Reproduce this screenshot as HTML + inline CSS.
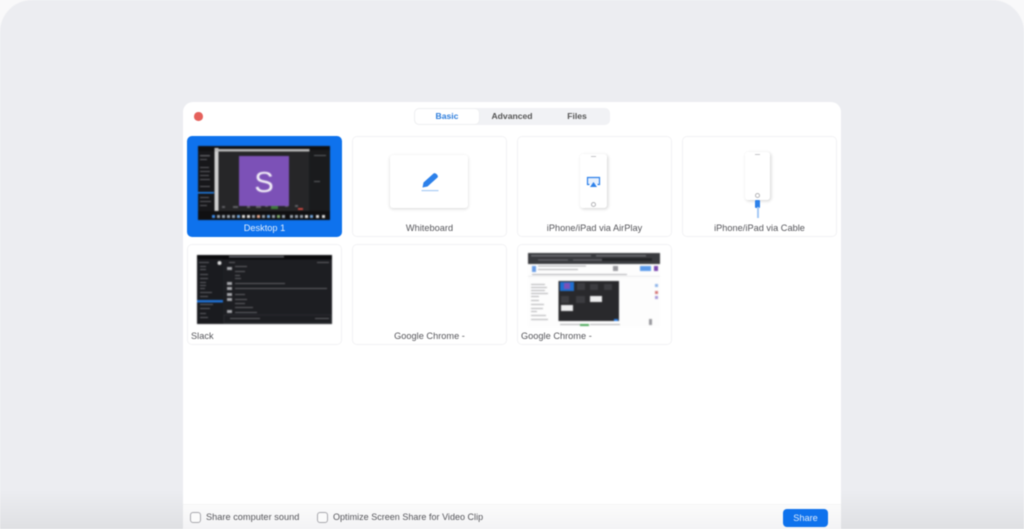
<!DOCTYPE html>
<html><head><meta charset="utf-8">
<style>
html,body{margin:0;padding:0;width:1024px;height:529px;overflow:hidden;background:#f9f9fa}
*{box-sizing:border-box}
#p{position:absolute;left:0;top:0;width:1024px;height:529px;overflow:hidden;font-family:"Liberation Sans",sans-serif;filter:blur(.4px)}
.a{position:absolute}
.bg{left:0;top:0;width:1024px;height:529px;border-radius:32px 32px 0 0;background:linear-gradient(#ecedf1 0,#ecedf1 490px,#dfe0e3 529px)}
.dlg{left:183px;top:102px;width:658px;height:427px;background:#fff;border-radius:10px 10px 0 0}
.foot{left:183px;top:504px;width:658px;height:25px;background:linear-gradient(#fbfbfb,#f3f3f5);border-top:1px solid #f5f5f6}
.card{width:155px;height:101px;border:1px solid #f2f2f4;border-radius:5px;background:#fff}
.lb{font-size:9.2px;line-height:12px;color:#55555a;white-space:nowrap;letter-spacing:.02px}
.c{text-align:center}
.tab{font-size:8.6px;font-weight:bold;line-height:16px;color:#555;text-align:center;top:108px}
.cb{width:11px;height:11px;border:1px solid #a9a9ae;border-radius:3px;background:#fbfbfb;top:512px}
.th{filter:blur(.5px)}
</style></head><body><div id="p">
<div class="a bg"></div>
<div class="a dlg"></div>
<div class="a" style="left:194px;top:112px;width:8.5px;height:8.5px;border-radius:50%;background:#e5615c"></div>

<div class="a" style="left:414px;top:108px;width:196px;height:16.5px;border-radius:5px;background:#f1f2f5"></div>
<div class="a" style="left:415px;top:109px;width:64px;height:14.5px;border-radius:4px;background:#fff;box-shadow:0 0 1px #ddd"></div>
<div class="a tab" style="left:415px;width:64px;color:#2d7ddc">Basic</div>
<div class="a tab" style="left:480px;width:64px">Advanced</div>
<div class="a tab" style="left:545px;width:64px">Files</div>

<!-- Desktop card -->
<div class="a" style="left:187px;top:136px;width:155px;height:101px;border-radius:5px;background:#0e72ed"></div>
<svg class="a th" style="left:198px;top:146px" width="132" height="74" viewBox="0 0 132 74">
<rect width="132" height="74" fill="#101012"/>
<rect x="20" y="4" width="91" height="61" fill="#262628"/>
<rect x="111" y="4" width="21" height="61" fill="#1a1b1d"/>
<rect x="0" y="5" width="16" height="60" fill="#17171a"/>
<rect x="16.5" y="2" width="4" height="63" fill="#cfcfcf"/>
<rect x="16.5" y="3" width="95" height="2.500" fill="#b9b9b9"/>
<rect x="0" y="46" width="16" height="1.500" fill="#1f7fe8"/>
<g fill="#5f5f64"><rect x="2" y="9" width="10" height="1.400"/><rect x="2" y="13" width="7" height="1"/><rect x="2" y="21" width="9" height="1"/><rect x="2" y="25" width="10" height="1"/><rect x="2" y="29" width="9" height="1"/><rect x="2" y="33" width="10" height="1"/><rect x="2" y="40" width="10" height="1"/><rect x="2" y="51" width="9" height="1"/><rect x="2" y="55" width="11" height="1"/><rect x="2" y="59" width="7" height="1"/><rect x="116" y="9" width="12" height="1"/><rect x="116" y="35" width="6" height="1"/>
<rect x="24" y="60" width="3" height="2"/><rect x="35" y="60" width="5" height="2"/><rect x="49" y="60" width="3" height="2"/><rect x="58" y="60" width="5" height="2"/><rect x="67" y="59" width="3" height="2"/><rect x="87" y="59" width="3" height="2"/><rect x="97" y="59" width="3" height="2"/></g>
<rect x="73" y="58" width="7" height="5" fill="#3e7a3a"/>
<rect x="100" y="62" width="5" height="2" fill="#c8463e"/>
<rect x="41" y="10" width="50" height="50" fill="#7c51b7"/>
<text x="66" y="46" font-family="Liberation Sans" font-size="29" fill="#f2eef8" text-anchor="middle">S</text>
<g fill="#98a1ac"><rect x="14" y="69" width="3" height="3" fill="#3d8be8"/><rect x="19" y="69" width="3" height="3"/><rect x="24" y="69" width="3" height="3"/><rect x="29" y="69" width="3" height="3"/><rect x="34" y="69" width="3" height="3"/><rect x="39" y="69" width="3" height="3" fill="#6fa1d8"/><rect x="44" y="69" width="3" height="3" fill="#ddd"/><rect x="49" y="69" width="3" height="3" fill="#ddd"/><rect x="54" y="69" width="3" height="3"/><rect x="59" y="69" width="3" height="3" fill="#e2a78f"/><rect x="64" y="69" width="3" height="3"/><rect x="69" y="69" width="3" height="3" fill="#6fa1d8"/><rect x="74" y="69" width="3" height="3"/><rect x="79" y="69" width="3" height="3" fill="#7ea96f"/><rect x="84" y="69" width="3" height="3"/><rect x="92" y="69" width="3" height="3"/><rect x="97" y="69" width="3" height="3"/><rect x="102" y="69" width="3" height="3"/><rect x="107" y="69" width="3" height="3" fill="#ddd"/><rect x="112" y="69" width="3" height="3" fill="#6fa1d8"/><rect x="118" y="69" width="3" height="3" fill="#ddd"/><rect x="124" y="69" width="3" height="3" fill="#ddd"/></g>
</svg>
<div class="a lb c" style="left:187px;top:222px;width:155px;color:#e4eefc">Desktop 1</div>

<!-- Whiteboard -->
<div class="a card" style="left:352px;top:136px"></div>
<div class="a" style="left:390px;top:155px;width:78px;height:53px;background:#fff;border-radius:3px;box-shadow:0 1px 3px rgba(0,0,0,.16)"></div>
<svg class="a" style="left:418px;top:170px" width="24" height="24" viewBox="0 0 24 24">
<path d="M4.500 17.500L5.500 12.500L15.500 3.500Q17 2.500 19 4.500Q20.500 6.500 19.500 7.500L9.500 16.500Z" fill="#2d81ea"/>
<rect x="3.500" y="20" width="17" height="1.200" fill="#a9ccf5"/>
</svg>
<div class="a lb c" style="left:352px;top:222px;width:155px">Whiteboard</div>

<!-- AirPlay -->
<div class="a card" style="left:517px;top:136px"></div>
<div class="a" style="left:580px;top:154px;width:27px;height:54px;background:#fff;border-radius:3px;box-shadow:1px 1px 3px rgba(0,0,0,.18)"></div>
<div class="a" style="left:591px;top:156px;width:5px;height:1px;background:#c5c5c8"></div>
<div class="a" style="left:591px;top:202px;width:5px;height:5px;border:1px solid #b5b5b8;border-radius:50%"></div>
<svg class="a" style="left:586px;top:176px" width="15" height="12" viewBox="0 0 15 12">
<path d="M3.500 8.500H1.500V1.500H13.500V8.500H11.500" fill="#e8f1fd" stroke="#2d81ea" stroke-width="1.200"/>
<path d="M7.500 6L11 11H4Z" fill="#2d81ea"/>
</svg>
<div class="a lb c" style="left:517px;top:222px;width:155px">iPhone/iPad via AirPlay</div>

<!-- Cable -->
<div class="a card" style="left:682px;top:136px"></div>
<div class="a" style="left:745px;top:151.5px;width:25px;height:48px;background:#fff;border-radius:3px;box-shadow:1px 1px 3px rgba(0,0,0,.18)"></div>
<div class="a" style="left:755px;top:153.5px;width:5px;height:1px;background:#c5c5c8"></div>
<div class="a" style="left:755px;top:193px;width:5px;height:5px;border:1px solid #b5b5b8;border-radius:50%"></div>
<div class="a" style="left:755px;top:199.5px;width:5px;height:8px;background:#2d81ea;border-radius:1px"></div>
<div class="a" style="left:757px;top:207px;width:1.5px;height:11px;background:#a5c9f5"></div>
<div class="a lb c" style="left:682px;top:222px;width:155px">iPhone/iPad via Cable</div>

<!-- Slack -->
<div class="a card" style="left:187px;top:244px"></div>
<svg class="a th" style="left:197px;top:255px" width="135" height="69" viewBox="0 0 135 69">
<rect width="135" height="69" fill="#1d1e22"/>
<rect width="135" height="4.500" fill="#0b0b0d"/>
<rect x="0" y="4" width="26" height="65" fill="#1a1b1f"/>
<rect x="0" y="45" width="26" height="2.500" fill="#1f6fd0"/>
<circle cx="22.500" cy="8" r="2" fill="#d8d8d8"/>
<g fill="#606167"><rect x="32" y="1" width="55" height="1.500"/><rect x="2" y="7" width="10" height="1"/><rect x="3" y="11" width="6" height="1"/><rect x="3" y="14" width="6" height="1"/><rect x="3" y="19" width="8" height="1"/><rect x="3" y="23" width="8" height="1"/><rect x="3" y="27" width="6" height="1"/><rect x="3" y="30" width="6" height="1"/><rect x="3" y="33" width="5" height="1"/><rect x="3" y="37" width="12" height="1"/><rect x="3" y="41" width="8" height="1"/><rect x="3" y="49" width="13" height="1"/><rect x="3" y="53" width="10" height="1"/><rect x="3" y="58" width="6" height="1"/><rect x="3" y="62" width="8" height="1"/>
<rect x="32" y="7" width="6" height="1"/><rect x="38" y="11" width="12" height="1"/><rect x="38" y="16" width="10" height="1"/><rect x="38" y="20" width="5" height="1"/><rect x="38" y="23" width="6" height="1"/><rect x="38" y="28" width="50" height="1"/><rect x="38" y="33" width="92" height="1"/><rect x="38" y="39" width="10" height="1"/><rect x="38" y="44" width="12" height="1"/><rect x="38" y="48" width="10" height="1"/><rect x="38" y="52" width="18" height="1"/><rect x="38" y="57" width="22" height="1"/><rect x="33" y="63" width="30" height="1"/><rect x="118" y="63" width="14" height="1"/><rect x="120" y="7" width="12" height="1"/></g>
<g fill="#a5a6aa"><rect x="30" y="12" width="5" height="3"/><rect x="30" y="27" width="5" height="3"/><rect x="30" y="32" width="5" height="3"/><rect x="30" y="38" width="5" height="3"/><rect x="30" y="43" width="5" height="3"/><rect x="30" y="55" width="5" height="3"/></g>
<rect x="27" y="60" width="107" height="8" fill="none" stroke="#333439" stroke-width=".6"/>
</svg>
<div class="a lb" style="left:191px;top:330px">Slack</div>

<!-- Chrome 1 -->
<div class="a card" style="left:352px;top:244px"></div>
<div class="a lb c" style="left:352px;top:330px;width:155px">Google Chrome -</div>

<!-- Chrome 2 -->
<div class="a card" style="left:517px;top:244px"></div>
<svg class="a th" style="left:528px;top:253px" width="132" height="74" viewBox="0 0 132 74">
<rect width="132" height="74" fill="#fdfdfd"/>
<rect width="132" height="11" fill="#3a3b3f"/>
<g fill="#6c6d72"><rect x="3" y="2" width="60" height="1.500"/><rect x="68" y="2" width="50" height="1.500"/><rect x="10" y="6.500" width="30" height="1"/><rect x="45" y="6.500" width="30" height="1"/></g>
<rect x="74" y="5" width="50" height="3" fill="#242528"/>
<rect x="4" y="13" width="4" height="6" fill="#6a9de6"/>
<rect x="85" y="13" width="5" height="5" fill="#9a9a9e"/>
<rect x="112" y="13" width="11" height="5" fill="#5c9bec"/>
<rect x="126" y="13" width="4" height="5" fill="#7a48b0"/>
<g fill="#b0b0b4"><rect x="10" y="12.500" width="48" height="1"/><rect x="10" y="16" width="40" height="1"/><rect x="4" y="21" width="95" height="1"/><rect x="3" y="31" width="14" height="1"/><rect x="3" y="34" width="16" height="1"/><rect x="3" y="37" width="14" height="1"/><rect x="3" y="40" width="17" height="1"/><rect x="3" y="43" width="8" height="1"/><rect x="3" y="47" width="8" height="1"/><rect x="3" y="51" width="13" height="1"/><rect x="3" y="55" width="12" height="1"/><rect x="3" y="58" width="6" height="1"/><rect x="3" y="62" width="15" height="1"/><rect x="3" y="66" width="17" height="1"/><rect x="32" y="71" width="22" height="1"/><rect x="62" y="71" width="30" height="1"/></g>
<rect x="0" y="23" width="132" height=".6" fill="#e0e0e2"/>
<rect x="52" y="71" width="9" height="2" fill="#4fa95b"/>
<rect x="127" y="31" width="3" height="3" fill="#8fb5ea"/><rect x="127" y="38" width="3" height="3" fill="#d67a7a"/><rect x="127" y="43" width="3" height="3" fill="#a79ad8"/>
<rect x="30.500" y="28" width="60.500" height="40" fill="#29292c"/>
<rect x="32" y="29" width="14" height="9" fill="#1f6fd0"/>
<rect x="36" y="30" width="6" height="6" fill="#7c51b7"/>
<rect x="49" y="30" width="8" height="7" fill="#3c3c40"/>
<rect x="62" y="31" width="8" height="6" fill="#3c3c40"/>
<rect x="76" y="31" width="8" height="6" fill="#3c3c40"/>
<rect x="33" y="43" width="8" height="7" fill="#3c3c40"/>
<rect x="48" y="43" width="9" height="7" fill="#3c3c40"/>
<rect x="62" y="43" width="12" height="6" fill="#eee"/>
<rect x="33" y="52" width="12" height="6" fill="#eee"/>
<rect x="86" y="66" width="4" height="2" fill="#2d81ea"/>
<rect x="121" y="66" width="3" height="6" fill="#9a9a9e"/>
</svg>
<div class="a lb" style="left:521px;top:330px">Google Chrome -</div>

<!-- Footer -->
<div class="a foot"></div>
<div class="a cb" style="left:190px"></div>
<div class="a lb" style="left:206px;top:511px">Share computer sound</div>
<div class="a cb" style="left:317px"></div>
<div class="a lb" style="left:333px;top:511px;font-size:9px">Optimize Screen Share for Video Clip</div>
<div class="a" style="left:783px;top:509px;width:45px;height:18px;background:#0e72ed;border-radius:4px;color:#e1edfc;font-size:9.2px;line-height:18px;text-align:center">Share</div>
</div></body></html>
